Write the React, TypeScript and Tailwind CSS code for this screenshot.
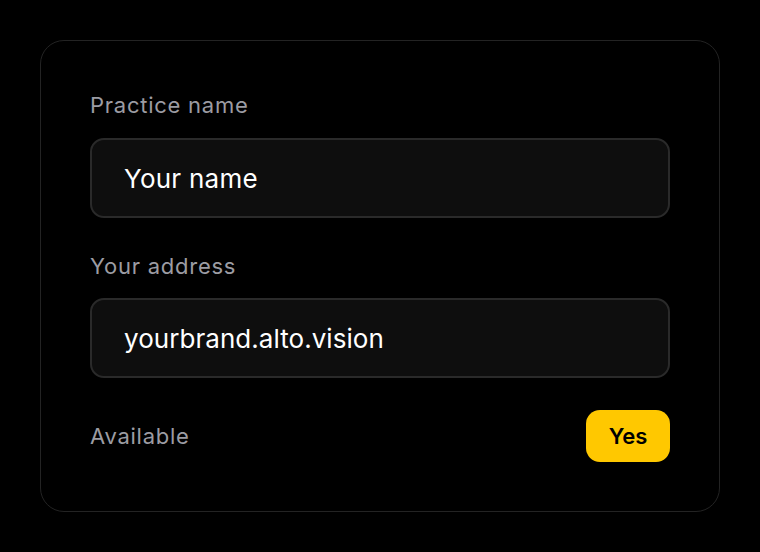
export default function App() {
  return (
    <div className="w-[760px] h-[552px] bg-black pt-[40px] pl-[40px]" style={{ fontFamily: "Inter, 'Noto Sans', sans-serif" }}>
      <div className="w-[680px] h-[472px] rounded-[24px] border border-[#232323] bg-black px-[49px] pt-[50px]">
        <label className="block text-[22px] leading-[28px] tracking-[0.75px] text-[#9c9ca3]">Practice name</label>
        <div className="mt-[19px] h-[80px] rounded-[14px] border-2 border-[#2a2a2a] bg-[#0e0e0e] flex items-center pl-[32px]">
          <span className="text-[26px] tracking-[0.25px] text-white">Your name</span>
        </div>
        <label className="mt-[34px] block text-[22px] leading-[28px] tracking-[0.75px] text-[#9c9ca3]">Your address</label>
        <div className="mt-[18px] h-[80px] rounded-[14px] border-2 border-[#2a2a2a] bg-[#0e0e0e] flex items-center pl-[32px]">
          <span className="text-[26px] tracking-[0.05px] text-white">yourbrand.alto.vision</span>
        </div>
        <div className="mt-[32px] flex items-center justify-between">
          <span className="text-[22px] tracking-[0.75px] text-[#9c9ca3]">Available</span>
          <span className="h-[52px] w-[84px] rounded-[14px] bg-[#ffc800] flex items-center justify-center text-[22px] font-semibold text-black">Yes</span>
        </div>
      </div>
    </div>
  );
}
